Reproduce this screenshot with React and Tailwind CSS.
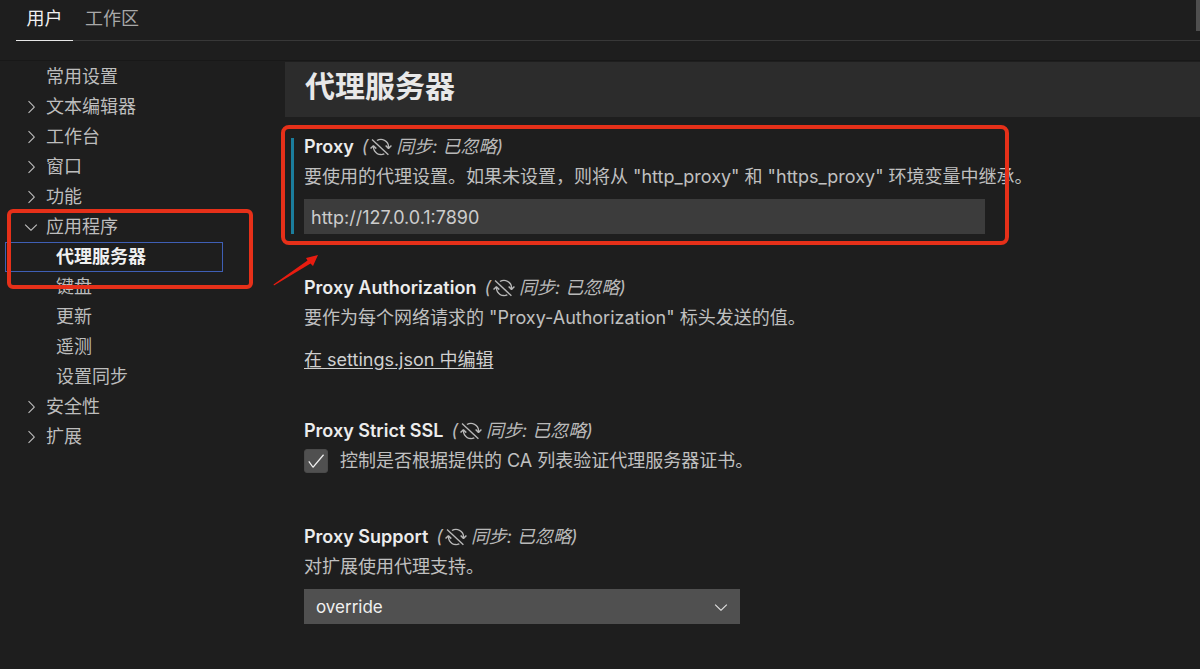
import React from "react";
import {
  VscCheck,
  VscChevronDown,
  VscChevronRight,
  VscSyncIgnored,
} from "react-icons/vsc";

function TreeItem({ label, icon }) {
  return (
    <li>
      <button
        type="button"
        className="flex h-[30px] w-full items-center pl-[21px] text-left"
      >
        <span className="flex w-[25px] shrink-0">
          {icon === "right" && <VscChevronRight className="size-5" />}
          {icon === "down" && <VscChevronDown className="size-5" />}
        </span>
        {label}
      </button>
    </li>
  );
}

function TreeChild({ label }) {
  return (
    <li>
      <button
        type="button"
        className="flex h-[30px] w-full items-center pl-14 text-left"
      >
        {label}
      </button>
    </li>
  );
}

function Sidebar() {
  return (
    <nav aria-label="设置" className="w-[285px] shrink-0 text-lg text-[#bdbdbd]">
      <ul>
        <TreeItem label="常用设置" />
        <TreeItem label="文本编辑器" icon="right" />
        <TreeItem label="工作台" icon="right" />
        <TreeItem label="窗口" icon="right" />
        <TreeItem label="功能" icon="right" />
        <li className="relative">
          <ul>
            <TreeItem label="应用程序" icon="down" />
            <li className="pl-[5px]">
              <button
                type="button"
                aria-current="true"
                className="flex h-[30px] w-[218px] items-center border border-[#3f5fb5] pl-[50px] text-left font-bold text-[#f0f0f0]"
              >
                代理服务器
              </button>
            </li>
            <TreeChild label="键盘" />
            <TreeChild label="更新" />
            <TreeChild label="遥测" />
            <TreeChild label="设置同步" />
          </ul>
          <div className="pointer-events-none absolute -top-[3px] left-[7px] h-20 w-[246px] rounded-md border-4 border-[#e63019]" />
        </li>
        <TreeItem label="安全性" icon="right" />
        <TreeItem label="扩展" icon="right" />
      </ul>
    </nav>
  );
}

function SettingTitle({ id, children }) {
  return (
    <div className="flex h-[30px] items-center gap-2 text-lg">
      <label htmlFor={id} className="font-semibold text-[#ececec]">
        {children}
      </label>
      <span className="flex items-center text-[#b8b8b8] italic">
        (<VscSyncIgnored className="mr-1 ml-0.5 size-[22px]" />
        同步: 已忽略)
      </span>
    </div>
  );
}

function Description({ children }) {
  return (
    <p className="text-lg leading-[30px] whitespace-nowrap text-[#c0c0c0]">
      {children}
    </p>
  );
}

function Arrow() {
  return (
    <svg
      viewBox="0 0 46 32"
      className="pointer-events-none absolute top-[122px] -left-[31px] h-8 w-[46px]"
      aria-hidden="true"
    >
      <path d="M.5 30.5 34.5 6.5 33 4 45 1 40 12 37.500 9.500 1 31.500Z" fill="#e81c10" />
    </svg>
  );
}

function Settings() {
  return (
    <main className="min-w-0 flex-1">
      <h1 className="flex h-[55px] items-center bg-[#2c2c2c] pb-1.5 pl-5 text-[30px] font-bold text-[#e8e8e8]">
        代理服务器
      </h1>
      <div className="pt-[15px] pl-[19px]">
        <section className="relative pb-[39px]">
          <SettingTitle id="proxy">Proxy</SettingTitle>
          <Description>
            要使用的代理设置。如果未设置，则将从 "http_proxy" 和 "https_proxy"
            环境变量中继承。
          </Description>
          <input
            id="proxy"
            type="text"
            defaultValue="http://127.0.0.1:7890"
            className="mt-[7px] block h-[35px] w-full max-w-[681px] bg-[#3c3c3c] px-[7px] pt-0.5 text-lg text-[#cccccc] outline-none"
          />
          <div className="pointer-events-none absolute top-[6px] -left-[13px] h-24 w-[3px] bg-[#1b7d9c]" />
          <div className="pointer-events-none absolute -top-[7px] -left-[23px] h-[120px] w-[728px] rounded-lg border-4 border-[#e63019]" />
          <Arrow />
        </section>

        <section className="pb-[39px]">
          <SettingTitle id="proxy-authorization">
            Proxy Authorization
          </SettingTitle>
          <Description>
            要作为每个网络请求的 "Proxy-Authorization" 标头发送的值。
          </Description>
          <a
            id="proxy-authorization"
            href="#settings"
            className="mt-3 inline-block h-8 text-lg leading-[30px] text-[#d0d0d0] underline underline-offset-2"
          >
            在 settings.json 中编辑
          </a>
        </section>

        <section className="pb-[46px]">
          <SettingTitle id="strict-ssl">Proxy Strict SSL</SettingTitle>
          <div className="flex items-center gap-3">
            <span className="relative flex size-6 shrink-0">
              <input
                id="strict-ssl"
                type="checkbox"
                defaultChecked
                className="peer size-6 appearance-none rounded-[3px] border border-[#4a4a4a] bg-[#505050]"
              />
              <VscCheck className="pointer-events-none absolute inset-0.5 hidden size-5 text-[#f0f0f0] peer-checked:block" />
            </span>
            <Description>
              控制是否根据提供的 CA 列表验证代理服务器证书。
            </Description>
          </div>
        </section>

        <section>
          <SettingTitle id="proxy-support">Proxy Support</SettingTitle>
          <Description>对扩展使用代理支持。</Description>
          <div className="relative mt-[7px] w-full max-w-[436px]">
            <select
              id="proxy-support"
              defaultValue="override"
              className="h-[35px] w-full appearance-none bg-[#505050] px-3 pt-0.5 text-[17px] text-[#f0f0f0] outline-none"
            >
              <option value="off">off</option>
              <option value="on">on</option>
              <option value="fallback">fallback</option>
              <option value="override">override</option>
            </select>
            <VscChevronDown className="pointer-events-none absolute top-2 right-[9px] size-5 text-[#e0e0e0]" />
          </div>
        </section>
      </div>
    </main>
  );
}

export default function App() {
  return (
    <div
      lang="zh-CN"
      className="min-h-screen bg-[#1e1e1e] font-['Inter','Noto_Sans_CJK_SC',sans-serif]"
    >
      <header className="relative h-[61px] border-b border-[#181818] pl-4">
        <div
          role="tablist"
          className="flex h-[41px] border-b border-[#383838] text-lg"
        >
          <button
            type="button"
            role="tab"
            aria-selected="true"
            className="-mb-px w-[57px] border-b border-[#e7e7e7] pb-0.5 text-[#f0f0f0]"
          >
            用户
          </button>
          <button
            type="button"
            role="tab"
            aria-selected="false"
            className="ml-3 pb-0.5 text-[#a8a8a8]"
          >
            工作区
          </button>
        </div>
        <div className="absolute top-0 right-0 h-[31px] w-1 bg-[#4f4f4f]" />
      </header>
      <div className="flex pt-px">
        <Sidebar />
        <Settings />
      </div>
    </div>
  );
}
